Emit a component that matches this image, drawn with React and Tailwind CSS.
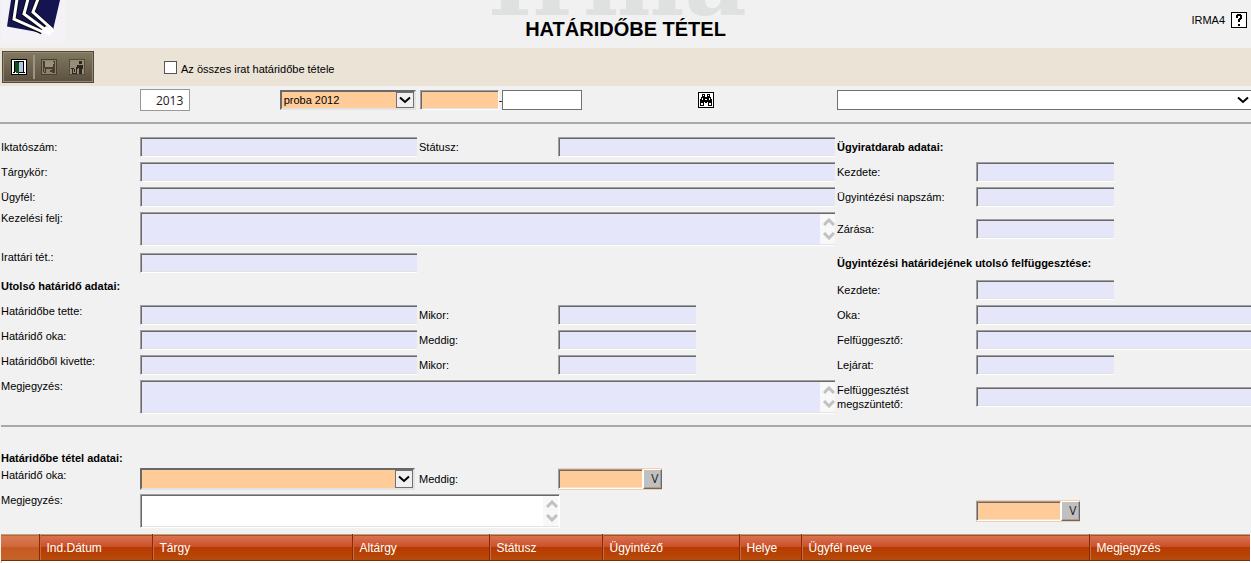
import React, { useState } from "react";

const sunken =
  "border border-t-[#a0a0a0] border-l-[#a0a0a0] border-b-white shadow-[inset_1px_1px_0_#696969,inset_0_-1px_0_#e3e3e3] outline-none";

const gridCols = "grid grid-cols-9 gap-x-0.5 pl-px -mr-0.5";

const columns = [
  { name: "", width: "w-[38px]" },
  { name: "Ind.Dátum", width: "w-[113px]" },
  { name: "Tárgy", width: "w-[200px]" },
  { name: "Altárgy", width: "w-[137px]" },
  { name: "Státusz", width: "w-[113px]" },
  { name: "Ügyintéző", width: "w-[137px]" },
  { name: "Helye", width: "w-[62px]" },
  { name: "Ügyfél neve", width: "w-[288px]" },
  { name: "Megjegyzés", width: "" },
];

const Logo = () => (
  <svg className="h-[43px] w-16" viewBox="0 0 64 43" aria-hidden="true">
    <rect width="64" height="43" fill="#f4f2f7" />
    <path d="M10 0H59L52 30L42 33L6 26.5Z" fill="#141450" />
    <g fill="none" stroke="#0a0a14" strokeWidth="5">
      <path d="M16 -1L13 19L41 32" />
      <path d="M27 -1L23 14L45 31" />
      <path d="M37 -1L32 12L51 30" />
    </g>
    <g fill="none" stroke="#fff" strokeWidth="3">
      <path d="M16 -1L13 19L42 32" />
      <path d="M27 -1L23 14L46 31" />
      <path d="M37 -1L32 12L52 30" />
    </g>
    <path d="M45 26L53 31L48 35L39 32Z" fill="#fff" />
  </svg>
);

const DoorIcon = () => (
  <svg className="size-4" viewBox="0 0 16 16" shapeRendering="crispEdges">
    <rect x="0.5" y="0.5" width="15" height="15" rx="1" fill="#fff" stroke="#000" />
    <rect x="3" y="2" width="10" height="11" fill="#000" />
    <rect x="8" y="3" width="4" height="10" fill="#a9cbe8" />
    <path d="M4 2L8 4V15L4 13Z" fill="#14501e" />
    <path d="M2 13.5H4M8 13.5H14" stroke="#000" />
  </svg>
);

const SaveIcon = () => (
  <svg className="size-4" viewBox="0 0 16 16" shapeRendering="crispEdges">
    <rect x="0.5" y="0.5" width="15" height="15" fill="#8b816c" stroke="#453e31" />
    <path d="M2 2H14V14H3L2 13Z" fill="#453e31" />
    <rect x="4" y="2" width="8" height="6" fill="#9a907c" />
    <rect x="12" y="3" width="1" height="2" fill="#9a907c" />
    <rect x="3" y="9" width="1" height="4" fill="#7b7250" />
    <rect x="5" y="10" width="6" height="4" fill="#8b816c" />
    <rect x="9" y="11" width="2" height="2" fill="#453e31" />
  </svg>
);

const TrashIcon = () => (
  <svg className="size-4" viewBox="0 0 16 16" shapeRendering="crispEdges">
    <rect x="0.5" y="0.5" width="15" height="15" fill="#968c78" stroke="#554c3d" />
    <rect x="10" y="2" width="3" height="3" fill="#2c271e" />
    <path d="M8 6H14V10H13V15H10V9H7V8H8Z" fill="#2c271e" />
    <path d="M3.5 9V14.5H7.5V9M2 9.5H5M7 9.5H9M5.5 10V13" fill="none" stroke="#2c271e" />
  </svg>
);

const SearchIcon = () => (
  <svg className="size-4" viewBox="0 0 16 16" shapeRendering="crispEdges">
    <rect x="0.5" y="0.5" width="15" height="15" rx="1" fill="#fff" stroke="#000" />
    <path
      d="M4 2H7V5H9V2H12V5H13V7H14V14H10V10H9V11H7V10H6V14H2V7H3V5H4Z"
      fill="#000"
    />
    <path d="M5 3H6V4H5ZM10 3H11V4H10ZM4 6H5V8H4ZM11 6H12V8H11ZM3 11H5V13H3ZM11 11H13V13H11ZM7 7H9V8H7Z" fill="#fff" />
  </svg>
);

const HelpIcon = () => (
  <svg className="size-4" viewBox="0 0 16 16" shapeRendering="crispEdges">
    <rect x="0.5" y="0.5" width="15" height="15" rx="1" fill="#fff" stroke="#000" />
    <path d="M5 3H6V2H10V3H11V7H10V8H9V10H7V7H8V6H9V4H7V6H5ZM7 12H9V14H7Z" fill="#000" />
  </svg>
);

const Chevron = () => (
  <svg className="h-2 w-3" viewBox="0 0 12 8" aria-hidden="true">
    <path d="M1 1.5L6 6L11 1.5" fill="none" stroke="#000" strokeWidth="2" />
  </svg>
);

// Labels of the left block hang from the top of the row, the others are centered
const Label = ({ htmlFor, top, children }) => (
  <label htmlFor={htmlFor} className={top ? "self-start pt-0.5" : "self-center"}>
    {children}
  </label>
);

const Field = ({ id, span = "" }) => (
  <input
    id={id}
    readOnly
    className={`h-5 w-full min-w-0 self-center border-r-0 bg-[#e6e6fa] px-1 ${sunken} ${span}`}
  />
);

const Memo = ({ id, span, readOnly }) => (
  <div
    className={`flex h-[34px] overflow-hidden self-center py-px pl-px ${sunken} ${span} ${
      readOnly ? "border-r-0 bg-[#e6e6fa]" : "border-r-white bg-white pr-px"
    }`}
  >
    <textarea id={id} readOnly={readOnly} className="min-w-0 flex-1 resize-none px-1 outline-none" />
    <div className="flex w-[15px] shrink-0 flex-col items-end justify-between bg-[#f8f8f8] py-1">
      <svg className="h-2 w-3" viewBox="0 0 12 8" aria-hidden="true">
        <path d="M1 7L6 2L11 7" fill="none" stroke="#c1c1c1" strokeWidth="3" />
      </svg>
      <svg className="h-2 w-3" viewBox="0 0 12 8" aria-hidden="true">
        <path d="M1 1L6 6L11 1" fill="none" stroke="#c1c1c1" strokeWidth="3" />
      </svg>
    </div>
  </div>
);

const OrangeSelect = ({ id, label, options, className }) => (
  <div className={`relative ${className}`}>
    <select
      id={id}
      aria-label={label}
      className="h-full w-full appearance-none border-2 border-t-[#696969] border-l-[#696969] border-r-[#e3e3e3] border-b-[#e3e3e3] bg-[#ffcc99] pl-0.5 outline-none"
    >
      {options.map((option) => (
        <option key={option}>{option}</option>
      ))}
    </select>
    <span className="pointer-events-none absolute inset-y-0.5 right-0.5 flex w-[18px] items-center justify-center border border-[#707070] bg-[#f0f0f0]">
      <Chevron />
    </span>
  </div>
);

const DateField = ({ id, label }) => (
  <div className="flex h-[22px] w-[104px] self-center border-y border-[#ffcc99] bg-white">
    <input
      id={id}
      aria-label={label}
      className={`w-[85px] border-r-white bg-[#ffcc99] px-1 ${sunken}`}
    />
    <button
      type="button"
      aria-label="Naptár"
      className="flex-1 border border-r-[#696969] border-b-[#696969] border-t-white border-l-white bg-[#c0c0c0] pl-1 font-['Open_Sans',sans-serif] text-xs leading-none text-[#222] shadow-[inset_-1px_-1px_0_#a0a0a0]"
    >
      V
    </button>
  </div>
);

const App = () => {
  const [all, setAll] = useState(false);
  const [year, setYear] = useState("2013");

  return (
    <div className="min-h-screen overflow-x-hidden bg-[#f1f1f1] font-['Liberation_Sans',Arial,sans-serif] text-[11px] leading-[14px] text-black">
      {/* Header */}
      <header className="relative grid h-12 grid-cols-[1fr_auto_1fr] overflow-hidden">
        <div className="pl-px">
          <Logo />
        </div>
        {/* Watermark, only its feet reach into the header */}
        <div
          aria-hidden="true"
          className="pointer-events-none absolute top-0 left-1/2 -ml-[138px] flex h-4 items-end overflow-hidden"
        >
          <span className="-mb-3.5 font-['DejaVu_Serif',serif] text-[96px] leading-none font-bold text-[#dfe1e1]">
            Irma
          </span>
        </div>
        <h1 className="relative self-end pb-2 text-xl leading-[22px] font-bold">
          HATÁRIDŐBE TÉTEL
        </h1>
        <div className="flex items-center justify-end gap-1.5 pr-1 pb-2">
          <span>IRMA4</span>
          <button type="button" aria-label="Súgó">
            <HelpIcon />
          </button>
        </div>
      </header>

      {/* Toolbar */}
      <div className="flex h-[38px] items-center bg-[#ebe3d6] pl-0.5">
        <div className="flex h-8 w-[92px] items-center border border-[#51483a] bg-linear-to-b from-[#83795f] to-[#5b5040] px-2 shadow-[inset_0_0_0_1px_#958a79]">
          <button type="button" aria-label="Kilépés">
            <DoorIcon />
          </button>
          <span className="mx-1.5 h-6 w-0.5 bg-[#9d9384]" />
          <button type="button" aria-label="Mentés" disabled>
            <SaveIcon />
          </button>
          <button type="button" aria-label="Törlés" disabled className="ml-3">
            <TrashIcon />
          </button>
        </div>
        <label className="ml-[70px] flex items-center gap-1">
          <input
            type="checkbox"
            checked={all}
            onChange={(e) => setAll(e.target.checked)}
            className="size-[13px] appearance-none border border-[#555] bg-white checked:bg-[#555]"
          />
          <span className="pt-1">Az összes irat határidőbe tétele</span>
        </label>
      </div>

      {/* Search row */}
      <div className={`${gridCols} h-9 items-center pb-2`}>
        <div />
        <input
          aria-label="Év"
          value={year}
          onChange={(e) => setYear(e.target.value)}
          className="h-[22px] w-[50px] border border-[#999] bg-white pr-1.5 text-right font-['Open_Sans',sans-serif] text-xs text-[#222] outline-none"
        />
        <div className="col-span-3 flex items-center">
          <OrangeSelect label="Iktatókönyv" options={["proba 2012"]} className="h-5 w-[136px]" />
          <input
            aria-label="Főszám"
            className={`ml-1 h-5 w-[79px] border-r-white bg-[#ffcc99] px-1 ${sunken}`}
          />
          <span>-</span>
          <input
            aria-label="Alszám"
            className="h-5 w-20 border border-[#707070] bg-white px-1 outline-none"
          />
        </div>
        <button type="button" aria-label="Keresés" className="w-4">
          <SearchIcon />
        </button>
        <div className="relative col-span-3 h-5">
          <select
            aria-label="Ügyiratdarab"
            className="h-full w-full appearance-none border border-r-0 border-[#707070] bg-white px-1 outline-none"
          >
            <option></option>
          </select>
          <span className="pointer-events-none absolute top-1.5 right-1">
            <Chevron />
          </span>
        </div>
      </div>

      <hr className="border-t-2 border-[#a9a9a9]" />

      {/* Document data */}
      <section
        className={`${gridCols} grid-rows-[25px_25px_25px_39px_29px_25px_25px_25px_25px_39px] pt-2.5 pb-[9px]`}
      >
        <Label htmlFor="iktatoszam">Iktatószám:</Label>
        <Field id="iktatoszam" span="col-span-2" />
        <Label htmlFor="statusz">Státusz:</Label>
        <Field id="statusz" span="col-span-2" />
        <h2 className="col-span-3 self-center font-bold">Ügyiratdarab adatai:</h2>

        <Label htmlFor="targykor">Tárgykör:</Label>
        <Field id="targykor" span="col-span-5" />
        <Label htmlFor="kezdete">Kezdete:</Label>
        <Field id="kezdete" />
        <div />

        <Label htmlFor="ugyfel">Ügyfél:</Label>
        <Field id="ugyfel" span="col-span-5" />
        <Label htmlFor="napszam">Ügyintézési napszám:</Label>
        <Field id="napszam" />
        <div />

        <Label htmlFor="kezelesi" top>Kezelési felj:</Label>
        <Memo id="kezelesi" span="col-span-5" readOnly />
        <Label htmlFor="zarasa">Zárása:</Label>
        <Field id="zarasa" />
        <div />

        <Label htmlFor="irattari" top>Irattári tét.:</Label>
        <Field id="irattari" span="col-span-2" />
        <div className="col-span-3" />
        <h2 className="col-span-3 self-center font-bold">
          Ügyintézési határidejének utolsó felfüggesztése:
        </h2>

        <h2 className="col-span-6 self-start pt-0.5 font-bold">Utolsó határidő adatai:</h2>
        <Label htmlFor="felf-kezdete">Kezdete:</Label>
        <Field id="felf-kezdete" />
        <div />

        <Label htmlFor="tette" top>Határidőbe tette:</Label>
        <Field id="tette" span="col-span-2" />
        <Label htmlFor="tette-mikor">Mikor:</Label>
        <Field id="tette-mikor" />
        <div />
        <Label htmlFor="felf-oka">Oka:</Label>
        <Field id="felf-oka" span="col-span-2" />

        <Label htmlFor="oka" top>Határidő oka:</Label>
        <Field id="oka" span="col-span-2" />
        <Label htmlFor="meddig">Meddig:</Label>
        <Field id="meddig" />
        <div />
        <Label htmlFor="felfuggeszto">Felfüggesztő:</Label>
        <Field id="felfuggeszto" span="col-span-2" />

        <Label htmlFor="kivette" top>Határidőből kivette:</Label>
        <Field id="kivette" span="col-span-2" />
        <Label htmlFor="kivette-mikor">Mikor:</Label>
        <Field id="kivette-mikor" />
        <div />
        <Label htmlFor="lejarat">Lejárat:</Label>
        <Field id="lejarat" />
        <div />

        <Label htmlFor="megjegyzes" top>Megjegyzés:</Label>
        <Memo id="megjegyzes" span="col-span-5" readOnly />
        <Label htmlFor="megszunteto">Felfüggesztést megszüntető:</Label>
        <Field id="megszunteto" span="col-span-2" />
      </section>

      <hr className="ml-px border-t-2 border-[#a9a9a9]" />

      {/* New deadline */}
      <section className={`${gridCols} grid-rows-[15px_25px_39px] pt-6 pb-1`}>
        <h2 className="col-span-9 font-bold">Határidőbe tétel adatai:</h2>

        <Label htmlFor="uj-oka" top>Határidő oka:</Label>
        <OrangeSelect id="uj-oka" options={[""]} className="col-span-2 h-[22px] w-[275px] self-center" />
        <Label htmlFor="uj-meddig">Meddig:</Label>
        <DateField id="uj-meddig" />
        <div className="col-span-4" />

        <Label htmlFor="uj-megjegyzes" top>Megjegyzés:</Label>
        <Memo id="uj-megjegyzes" span="col-span-3 -mr-1" />
        <div className="col-span-3" />
        <DateField label="Dátum" />
      </section>

      <div className="ml-px border-l border-[#c8c8b8] bg-white pb-1">
        <table className="-ml-px w-full table-fixed border-collapse">
          <thead>
            <tr className="h-[26px] border-t border-b border-t-[#aaa98d] border-b-[#7c2a00] bg-[linear-gradient(#dc7052_0%,#c9512a_44%,#b93a00_46%,#b54b0c_100%)]">
              {columns.map((col, idx) => (
                <th
                  key={idx}
                  className={`border-r border-r-[#852b08] pl-[7px] text-left text-xs font-normal text-white last:border-r-0 ${
                    idx === 0 ? "bg-[#d98a55]/40" : "shadow-[inset_1px_0_0_#d0693f]"
                  } ${col.width}`}
                >
                  {col.name}
                </th>
              ))}
            </tr>
          </thead>
        </table>
      </div>
    </div>
  );
};

export default App;
